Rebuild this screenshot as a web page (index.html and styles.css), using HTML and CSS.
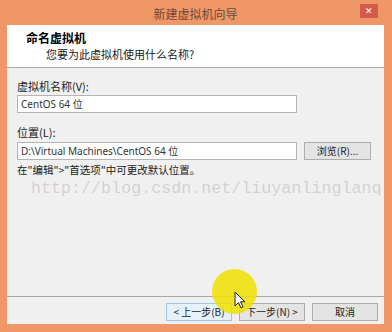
FILE: index.html
```html
<!DOCTYPE html>
<html>
<head>
<meta charset="utf-8">
<link rel="stylesheet" href="styles.css">
</head>
<body>
<div class="window">
  <div class="titlebar">
    <span class="title">新建虚拟机向导</span>
    <span class="close">✕</span>
  </div>
  <div class="content">
    <div class="header">
      <div class="h-title">命名虚拟机</div>
      <div class="h-sub">您要为此虚拟机使用什么名称?</div>
    </div>
    <div class="body">
      <div class="label l1">虚拟机名称(V):</div>
      <div class="input">CentOS 64 位</div>
      <div class="label l2">位置(L):</div>
      <div class="row">
        <div class="input">D:\Virtual Machines\CentOS 64 位</div>
        <div class="btn browse">浏览(R)...</div>
      </div>
      <div class="hint">在"编辑">"首选项"中可更改默认位置。</div>
    </div>
    <div class="footer">
      <div class="btn active">&lt; 上一步(B)</div>
      <div class="btn next">下一步(N) &gt;</div>
      <div class="btn cancel">取消</div>
    </div>
  </div>
  <div class="watermark">http://blog.csdn.net/liuyanlinglanq</div>
  <div class="spot"></div>
  <svg class="cursor" width="12" height="19" viewBox="0 0 12 19"><path d="M1 1 L1 15 L4.5 11.5 L7 17 L9 16 L6.5 10.8 L11 10.8 Z" fill="#fff" stroke="#222" stroke-width="1"/></svg>
</div>
</body>
</html>
```
FILE: styles.css
```css
html, body { margin: 0; padding: 0; }
body { font-family: "Noto Sans CJK SC", "Noto Sans", sans-serif; font-size: 11px; color: #1a1a1a; }
.window {
  position: relative;
  width: 392px; height: 332px;
  box-sizing: border-box;
  background: #ef9766;
  padding: 0 8px 8px 7px;
  display: flex; flex-direction: column;
  overflow: hidden;
}
.titlebar {
  height: 25px; flex: none;
  display: flex; align-items: center; justify-content: center;
}
.title { font-size: 12px; color: #6a4a3a; line-height: 14px; margin-top: 2px; }
.close {
  position: absolute; left: 360px; top: 4px;
  width: 18px; height: 14px;
  background: #d45a4c; color: #fff;
  font-size: 9px; line-height: 14px; text-align: center;
}
.content { flex: 1; background: #f0f0f0; display: flex; flex-direction: column; }
.header {
  height: 43px; flex: none; box-sizing: border-box;
  background: #fff; border-bottom: 1px solid #a8a8a8;
  padding: 5px 0 0 19px;
}
.h-title { font-weight: bold; font-size: 12px; line-height: 16px; color: #000; }
.h-sub { margin-left: 20px; line-height: 16px; font-size: 11px; }
.body { flex: 1; padding: 0 0 0 10px; display: flex; flex-direction: column; }
.label { line-height: 14px; font-size: 11px; }
.l1 { margin-top: 11px; margin-bottom: 2px; }
.l2 { margin-top: 12px; margin-bottom: 3px; }
.input {
  width: 280px; height: 18px; box-sizing: border-box;
  background: #fff; border: 1px solid #b4b4b4;
  font-size: 10px; line-height: 16px; padding-left: 3px; color: #333;
  font-family: "Noto Sans", "Noto Sans CJK SC", sans-serif;
}
.row { display: flex; gap: 7px; }
.btn {
  height: 18px; box-sizing: border-box;
  border: 1px solid #adadad; background: #e4e4e4;
  font-size: 10px; line-height: 16px; text-align: center; color: #222;
}
.browse { width: 67px; }
.hint { margin-top: 3px; line-height: 13px; font-size: 10.5px; }
.footer {
  height: 28px; flex: none; box-sizing: border-box;
  border-top: 1px solid #a8a8a8;
  display: flex; justify-content: flex-end; align-items: flex-start;
  padding: 6px 6px 0 0;
}
.footer .btn { width: 66px; height: 18px; }
.footer .active { background: #e5f1fb; border-color: #9cc4e8; margin-right: 7px; }
.footer .next { margin-right: 7px; }
.watermark {
  position: absolute; left: 31px; top: 183px;
  font-family: "Liberation Mono", monospace; font-size: 16.7px;
  line-height: 12px;
  color: rgba(150,150,150,0.35);
  white-space: nowrap; pointer-events: none;
}
.spot {
  position: absolute; left: 212px; top: 269px;
  width: 45px; height: 45px; border-radius: 50%;
  background: rgba(240, 225, 0, 0.85);
}
.cursor { position: absolute; left: 234px; top: 291px; }
```
